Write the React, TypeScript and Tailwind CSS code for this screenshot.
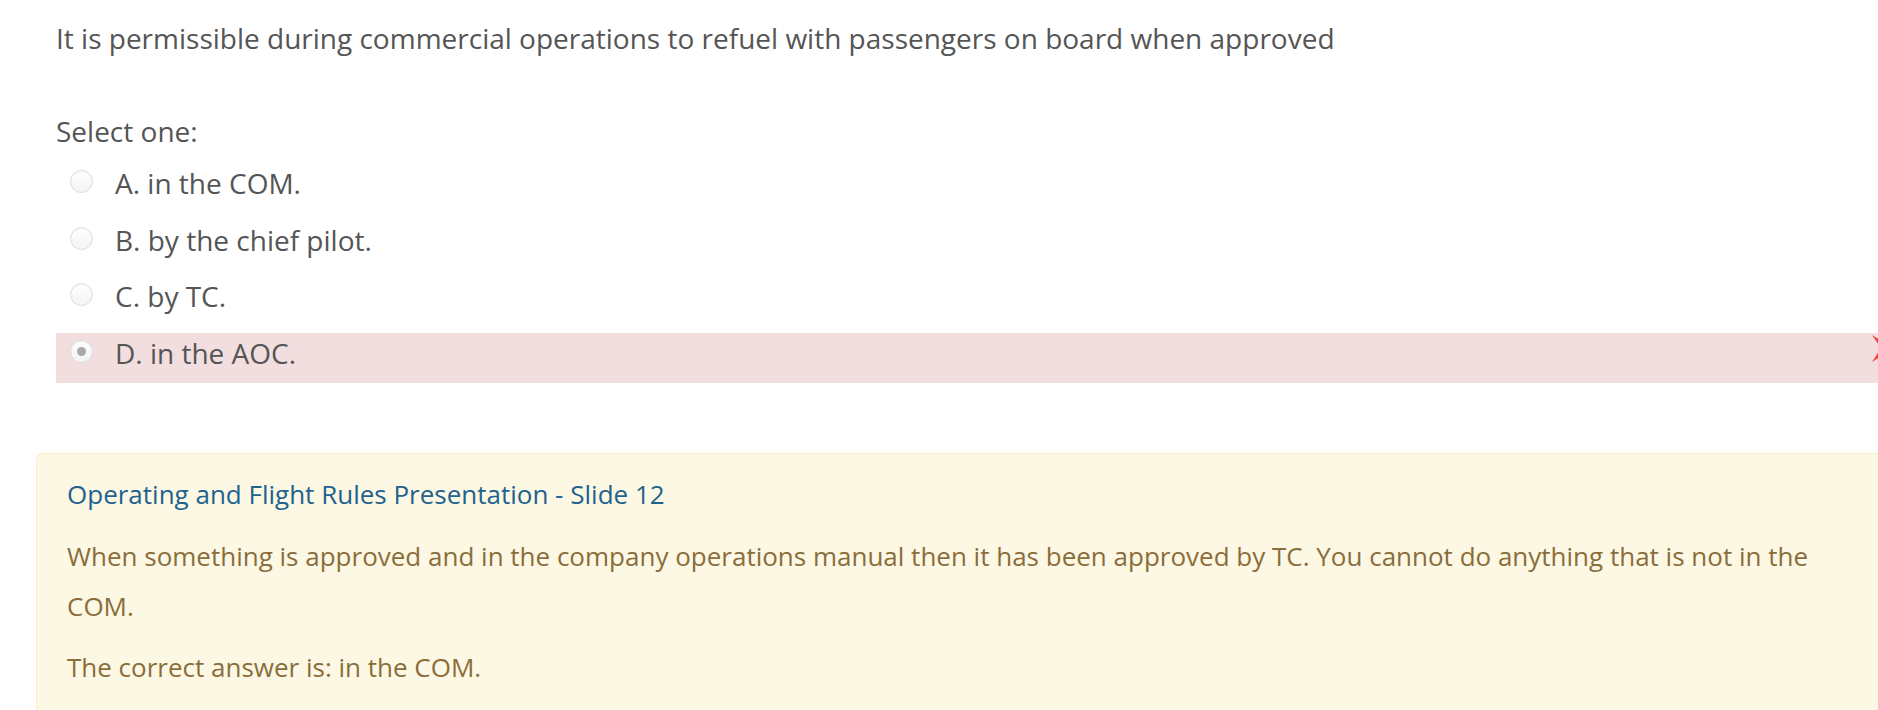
import React from 'react';

interface AnswerItem {
  id: string;
  label: string;
  selected?: boolean;
}

const answers: AnswerItem[] = [
  { id: 'a', label: 'A. in the COM.' },
  { id: 'b', label: 'B. by the chief pilot.' },
  { id: 'c', label: 'C. by TC.' },
  { id: 'd', label: 'D. in the AOC.', selected: true },
];

function Radio({ checked }: { checked?: boolean }) {
  return (
    <span className="flex h-[23px] w-[23px] shrink-0 items-center justify-center rounded-full border border-[#dcdcdc] bg-gradient-to-b from-[#ffffff] to-[#f3f3f3] shadow-[inset_0_1px_1px_rgba(0,0,0,0.04)]">
      {checked && <span className="h-[9px] w-[9px] rounded-full bg-[#a9a9a9]" />}
    </span>
  );
}

function IncorrectIcon() {
  return (
    <svg className="absolute left-[1869px] top-[332px]" width="34" height="32" viewBox="0 0 34 32">
      <path d="M3 3 L17 12 L31 3 L22 16 L31 30 L17 21 L3 30 L12 16 Z" fill="#f5413a" />
    </svg>
  );
}

export default function App() {
  return (
    <div className="relative h-[710px] w-[1878px] overflow-hidden bg-white font-['Open_Sans',sans-serif]">
      <div className="pl-[56px] pt-[20px]">
        <p className="text-[28px] leading-[36px] text-[#555]">
          It is permissible during commercial operations to refuel with passengers on board when approved
        </p>
        <p className="mt-[57px] text-[28px] leading-[36px] text-[#555]">Select one:</p>
        <div className="mt-[14px] flex flex-col gap-[6.7px]">
          {answers.map((answer) => (
            <div
              key={answer.id}
              className={`flex h-[50px] items-start pt-[7px] ${answer.selected ? 'bg-[#f2dede]' : ''}`}
            >
              <span className="ml-[14px]">
                <Radio checked={answer.selected} />
              </span>
              <label className="ml-[22px] text-[28px] leading-[26px] text-[#555]">{answer.label}</label>
            </div>
          ))}
        </div>
      </div>
      <IncorrectIcon />
      <div className="ml-[36px] mt-[70px] w-[1880px] rounded-[6px] border border-[#faebcc] bg-[#fcf8e3] pl-[30px] pr-[76px] pt-[22px] pb-[30px] text-[#8a6d3b]">
        <p className="text-[26px] leading-[36px] text-[#22628f]">Operating and Flight Rules Presentation - Slide 12</p>
        <p className="mt-[19px] text-[26px] leading-[50px]">
          When something is approved and in the company operations manual then it has been approved by TC. You cannot do anything that is not in the COM.
        </p>
        <p className="mt-[11px] text-[26px] leading-[50px]">The correct answer is: in the COM.</p>
      </div>
    </div>
  );
}
